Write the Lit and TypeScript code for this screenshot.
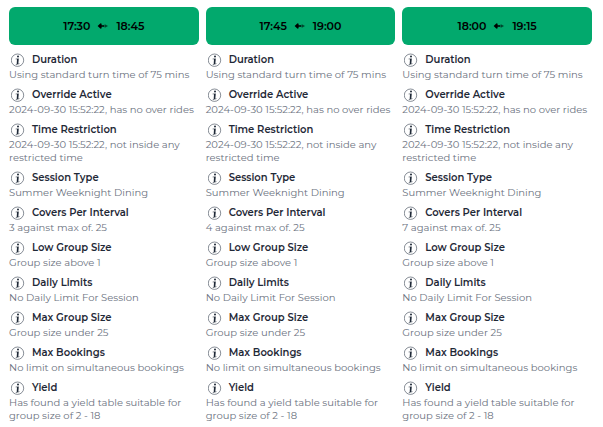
import { LitElement, html, css, svg } from "lit";
import { customElement, property } from "lit/decorators.js";

interface Rule {
  title: string;
  text: string;
}

interface Slot {
  start: string;
  end: string;
  covers: number;
}

const slots: Slot[] = [
  { start: "17:30", end: "18:45", covers: 3 },
  { start: "17:45", end: "19:00", covers: 4 },
  { start: "18:00", end: "19:15", covers: 7 },
];

const rulesFor = (slot: Slot): Rule[] => [
  { title: "Duration", text: "Using standard turn time of 75 mins" },
  { title: "Override Active", text: "2024-09-30 15:52:22, has no over rides" },
  { title: "Time Restriction", text: "2024-09-30 15:52:22, not inside any restricted time" },
  { title: "Session Type", text: "Summer Weeknight Dining" },
  { title: "Covers Per Interval", text: `${slot.covers} against max of. 25` },
  { title: "Low Group Size", text: "Group size above 1" },
  { title: "Daily Limits", text: "No Daily Limit For Session" },
  { title: "Max Group Size", text: "Group size under 25" },
  { title: "Max Bookings", text: "No limit on simultaneous bookings" },
  { title: "Yield", text: "Has found a yield table suitable for group size of 2 - 18" },
];

const infoIcon = html`<svg class="info" viewBox="0 0 14 14" aria-hidden="true">
  ${svg`<circle cx="6.5" cy="7.2" r="6.2" fill="none" stroke="#374151" stroke-width="0.6" />
  <circle cx="7" cy="3.6" r="1" fill="#1f2937" />
  <path d="M4.6 5.7 7.8 5.4 7.3 10.8 8.5 10.6V11.1L4.8 11.7V11.2L5.7 11 6 6.3H4.6z" fill="#1f2937" />`}
</svg>`;

const swapIcon = html`<svg class="swap" viewBox="0 0 12 8" aria-hidden="true">
  ${svg`<path d="M6.5 4h3" stroke="#000" stroke-opacity="0.5" />
  <path d="M7.6 2 11.2 4 7.6 6z" fill="#000" fill-opacity="0.45" />
  <path d="M0.6 4 3.6 1.2 4.6 1.8V3.2H7V4.8H4.6V6.2L3.6 6.8z" fill="#000" />`}
</svg>`;

@customElement("slot-column")
class SlotColumn extends LitElement {
  @property({ attribute: false }) slotData!: Slot;

  static styles = css`
    :host {
      display: block;
      min-width: 0;
    }
    .time {
      display: flex;
      align-items: center;
      justify-content: center;
      gap: 7px;
      width: 100%;
      height: 38px;
      margin: 0;
      padding: 0;
      border: 0;
      border-radius: 6px;
      background: #02a96d;
      color: #000;
      font: 600 11px/16px Montserrat, Inter, sans-serif;
      cursor: pointer;
    }
    .swap {
      width: 12px;
      height: 8px;
    }
    .rules {
      display: flex;
      flex-direction: column;
      gap: 6px;
      margin: 7px 0 0;
    }
    .title {
      display: flex;
      align-items: center;
      gap: 7px;
      padding-left: 2px;
      color: #1f2937;
      font-size: 10px;
      font-weight: 600;
      line-height: 16px;
    }
    .info {
      flex: none;
      width: 14px;
      height: 14px;
    }
    .text {
      margin: 0;
      color: #6b7280;
      font-size: 10px;
      line-height: 13px;
    }
  `;

  render() {
    const { start, end } = this.slotData;
    return html`
      <button class="time" type="button">
        <span>${start}</span>${swapIcon}<span>${end}</span>
      </button>
      <dl class="rules">
        ${rulesFor(this.slotData).map(
          (rule) => html`<div>
            <dt class="title">${infoIcon}<span>${rule.title}</span></dt>
            <dd class="text">${rule.text}</dd>
          </div>`
        )}
      </dl>
    `;
  }
}

@customElement("app-root")
class AppRoot extends LitElement {
  static styles = css`
    :host {
      display: block;
      background: #fff;
      font-family: Montserrat, "Open Sans", sans-serif;
    }
    .board {
      display: grid;
      grid-template-columns: repeat(3, minmax(0, 1fr));
      gap: 7px;
      padding: 7px 11px 0 9px;
    }
  `;

  render() {
    return html`<main class="board">
      ${slots.map((s) => html`<slot-column .slotData=${s}></slot-column>`)}
    </main>`;
  }
}
